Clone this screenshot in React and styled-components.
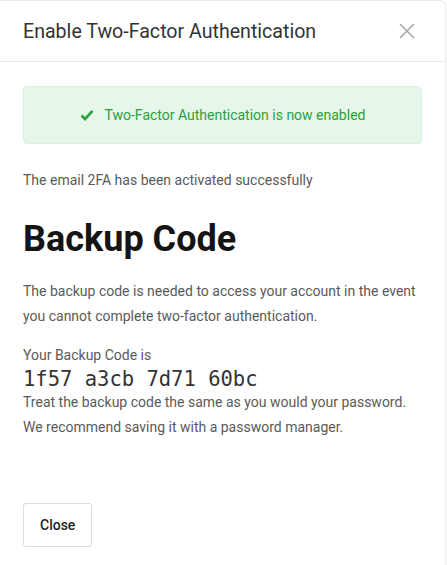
import React from 'react';
import styled, { createGlobalStyle } from 'styled-components';

const GlobalStyle = createGlobalStyle`
  html, body {
    margin: 0;
    padding: 0;
    background: #fff;
  }
  body {
    font-family: Roboto, "Liberation Sans", Arial, sans-serif;
    overflow: hidden;
  }
`;

const Modal = styled.div`
  width: 446px;
  height: 565px;
  border-top: 1px solid #ebebeb;
  border-right: 1px solid #ebebeb;
  border-top-right-radius: 6px;
  box-sizing: border-box;
  background: #fff;
  overflow: hidden;
`;

const Header = styled.div`
  display: flex;
  align-items: center;
  justify-content: space-between;
  height: 60px;
  padding: 0 23px;
  border-bottom: 1px solid #e9e9e9;
`;

const Title = styled.h2`
  margin: 0;
  font-size: 19.6px;
  font-weight: 400;
  color: #333;
`;

const CloseIcon = styled.button`
  display: flex;
  padding: 0;
  margin-right: 7px;
  border: 0;
  background: none;
  cursor: pointer;
`;

const Body = styled.div`
  padding: 24px 23px;
`;

const Alert = styled.div`
  display: flex;
  align-items: center;
  justify-content: center;
  gap: 11px;
  height: 56px;
  border: 1px solid #d6f2dc;
  border-radius: 4px;
  background: #e6f6e9;
  color: #2aa043;
  font-size: 14px;
`;

const Text = styled.p`
  margin: ${(p) => p.$mt || 0}px 0 0;
  font-size: 14px;
  line-height: 25px;
  color: #5a5a5a;
`;

const Heading = styled.h1`
  margin: 24px 0 0;
  font-size: 36px;
  font-weight: 700;
  line-height: 44px;
  color: #141414;
`;

const Code = styled.div`
  padding-top: 1px;
  font-family: "DejaVu Sans Mono", "Liberation Mono", monospace;
  font-size: 20.5px;
  line-height: 21px;
  color: #333;
`;

const Button = styled.button`
  margin-top: 63px;
  height: 44px;
  padding: 0 16px;
  border: 1px solid #dcdcdc;
  border-radius: 3px;
  background: #fff;
  font-family: Roboto, sans-serif;
  font-size: 14px;
  font-weight: 500;
  color: #222;
`;

export default function App() {
  return (
    <>
      <GlobalStyle />
      <Modal>
        <Header>
          <Title>Enable Two-Factor Authentication</Title>
          <CloseIcon aria-label="close">
            <svg width="16" height="16" viewBox="0 0 16 16">
              <path d="M1 1L15 15M15 1L1 15" stroke="#a5a8ad" strokeWidth="1.6" />
            </svg>
          </CloseIcon>
        </Header>
        <Body>
          <Alert>
            <svg width="14" height="12" viewBox="0 0 14 12">
              <path d="M1.5 6.5L5 10L12.5 1.8" fill="none" stroke="#2aa043" strokeWidth="2.6" />
            </svg>
            Two-Factor Authentication is now enabled
          </Alert>
          <Text $mt={24}>The email 2FA has been activated successfully</Text>
          <Heading>Backup Code</Heading>
          <Text $mt={18}>
            The backup code is needed to access your account in the event
            <br />
            you cannot complete two-factor authentication.
          </Text>
          <Text $mt={14}>Your Backup Code is</Text>
          <Code>1f57 a3cb 7d71 60bc</Code>
          <Text>
            Treat the backup code the same as you would your password.
            <br />
            We recommend saving it with a password manager.
          </Text>
          <Button>Close</Button>
        </Body>
      </Modal>
    </>
  );
}
